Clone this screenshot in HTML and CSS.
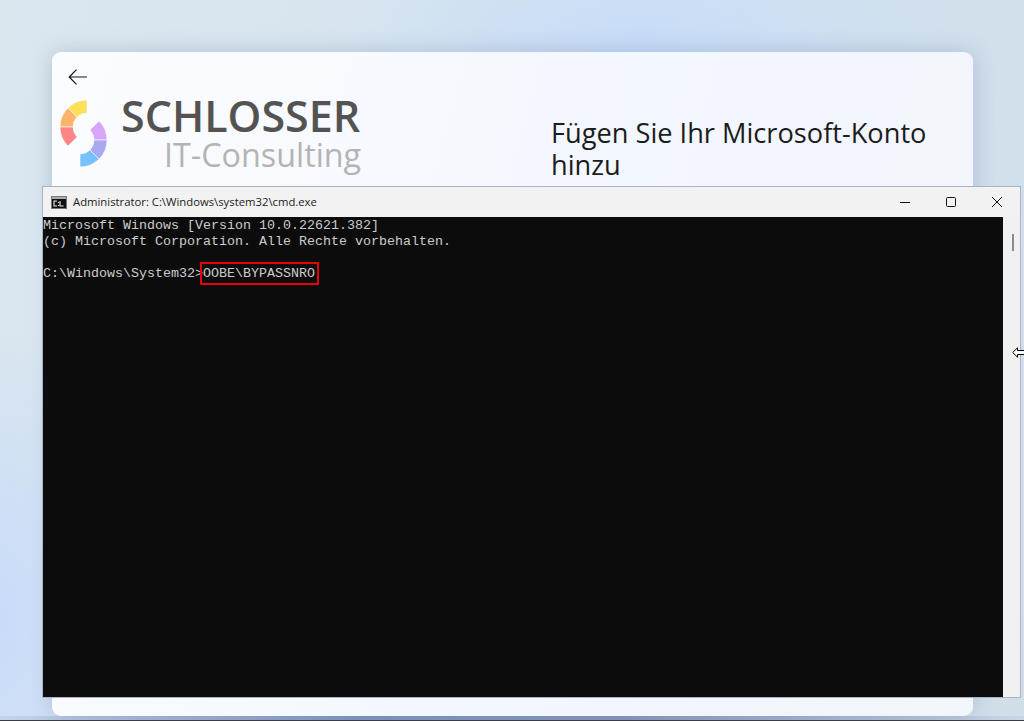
FILE: index.html
```html
<!DOCTYPE html>
<html lang="de">
<head>
<meta charset="utf-8">
<title>Administrator: C:\Windows\system32\cmd.exe</title>
<link rel="stylesheet" href="styles.css">
</head>
<body>
<main class="desktop">
  <section class="oobe-card">
    <svg class="back-icon" width="20" height="16" viewBox="0 0 20 16" aria-hidden="true"><path d="M8.5 .7 1.2 8l7.3 7.3M1.4 8H19" fill="none" stroke="#10131c" stroke-width="1.2"/></svg>
    <div class="oobe-columns">
      <div class="brand">
        <svg class="brand-mark" width="48" height="68" viewBox="0 0 48 68" aria-hidden="true">
          <g stroke="#fafcff" stroke-width=".6">
            <path fill="#fbe05a" d="M27 0A27 27 0 0 0 7.91 7.91L17.1 17.1A14 14 0 0 1 27 13Z"/>
            <path fill="#fdb468" d="M7.91 7.91A27 27 0 0 0 0 27L13 27A14 14 0 0 1 17.1 17.1Z"/>
            <path fill="#fe8587" d="M0 27A27 27 0 0 0 7.91 46.09L17.1 36.9A14 14 0 0 1 13 27Z"/>
            <path fill="#d8a6f8" d="M39.09 20.91A27 27 0 0 1 47 40L34 40A14 14 0 0 0 29.9 30.1Z"/>
            <path fill="#a8a9f0" d="M47 40A27 27 0 0 1 39.09 59.09L29.9 49.9A14 14 0 0 0 34 40Z"/>
            <path fill="#79c0fe" d="M39.09 59.09A27 27 0 0 1 20 67L20 54A14 14 0 0 0 29.9 49.9Z"/>
          </g>
        </svg>
        <div class="brand-text">
          <div class="brand-name">SCHLOSSER</div>
          <div class="brand-sub">IT-Consulting</div>
        </div>
      </div>
      <h1 class="oobe-title">Fügen Sie Ihr Microsoft-Konto hinzu</h1>
    </div>
  </section>

  <section class="cmd-window">
    <header class="cmd-titlebar">
      <svg class="cmd-icon" width="16" height="13" viewBox="0 0 16 13" aria-hidden="true">
        <rect x=".5" y=".5" width="15" height="12" fill="#111" stroke="#777"/>
        <rect x="1" y="1" width="14" height="2" fill="#aaa"/>
        <path d="M6 5H3v5h3M7.5 6v1M7.5 9v1M9 5v5h3.5" fill="none" stroke="#eee" stroke-width="1.1"/>
      </svg>
      <span class="cmd-title">Administrator: C:\Windows\system32\cmd.exe</span>
      <div class="cmd-controls">
        <button class="cmd-btn" aria-label="Minimieren"><svg width="10" height="10" viewBox="0 0 10 10"><path d="M0 5.5H10" stroke="#111" stroke-width="1"/></svg></button>
        <button class="cmd-btn" aria-label="Maximieren"><svg width="10" height="10" viewBox="0 0 10 10"><rect x=".5" y=".5" width="9" height="9" rx="1" fill="none" stroke="#111"/></svg></button>
        <button class="cmd-btn" aria-label="Schließen"><svg width="10" height="10" viewBox="0 0 10 10"><path d="M0 0 10 10M10 0 0 10" stroke="#111" stroke-width="1"/></svg></button>
      </div>
    </header>
    <div class="cmd-body">
      <pre class="cmd-output">Microsoft Windows [Version 10.0.22621.382]
(c) Microsoft Corporation. Alle Rechte vorbehalten.

C:\Windows\System32&gt;<span class="cmd-input">OOBE\BYPASSNRO</span></pre>
      <div class="cmd-scrollbar"><div class="cmd-thumb"></div></div>
    </div>
  </section>

  <svg class="resize-cursor" width="18" height="11" viewBox="0 0 18 11" aria-hidden="true">
    <path d="M.7 5.5 5.5 .8V3.5H18V7.5H5.5V10.2Z" fill="#fff" stroke="#000"/>
  </svg>
</main>
</body>
</html>
```
FILE: styles.css
```css
* { box-sizing: border-box; }
html, body { margin: 0; height: 100%; overflow: hidden; }
.desktop {
  position: relative;
  width: 1024px;
  height: 721px;
  overflow: hidden;
  border-bottom: 1px solid #3a3d42;
  background:
    linear-gradient(90deg, #c3d3ec 0%, #8598c2 35%, #8a9ac0 60%, #c9d5e4 100%) bottom 0 left 0 / 100% 4px no-repeat,
    radial-gradient(ellipse 300px 120px at 640px 40px, #c7dcf7 0%, rgba(199,220,247,0) 100%),
    radial-gradient(ellipse 140px 300px at 0 620px, #c8dbf9 0%, rgba(200,219,249,0) 100%),
    linear-gradient(100deg, #dbe7ef 0%, #d5e3f0 60%, #d0deea 100%);
  font-family: "Open Sans", "Liberation Sans", sans-serif;
}
.oobe-card {
  position: absolute;
  left: 52px;
  top: 52px;
  width: 921px;
  height: 664px;
  border-radius: 9px;
  background: linear-gradient(105deg, #fbfcfe 0%, #f3f7fe 55%, #f2f5fa 100%);
  box-shadow: 0 0 22px rgba(60, 85, 140, .24);
  padding: 17px 0 0 8px;
}
.back-icon { display: block; margin-left: 8px; }
.oobe-columns { display: flex; margin-top: 15px; }
.brand { display: flex; width: 491px; align-items: flex-start; }
.brand-mark { flex: none; margin-top: 0; }
.brand-text { margin-left: 13px; margin-top: -9px; }
.brand-name { font-size: 43px; font-weight: 600; line-height: 50px; color: #535353; white-space: nowrap; }
.brand-sub { font-size: 32.3px; line-height: 27px; color: #b4b4b4; margin-left: 43px; white-space: nowrap; }
.oobe-title {
  margin: 17px 0 0;
  width: 400px;
  font-size: 27.2px;
  line-height: 32px;
  font-weight: 400;
  color: #1b1c1e;
}
.cmd-window {
  position: absolute;
  left: 42px;
  top: 186px;
  width: 979px;
  height: 512px;
  border: 1px solid #a9b4c2;
  background: #f0f0f0;
  display: flex;
  flex-direction: column;
}
.cmd-titlebar {
  flex: none;
  height: 30px;
  display: flex;
  align-items: center;
  padding-left: 8px;
  background: #f2f2f2;
}
.cmd-icon { flex: none; }
.cmd-title { margin-left: 6px; margin-top: -2px; font-family: "Open Sans", sans-serif; font-size: 11.3px; color: #1a1a1a; }
.cmd-controls { margin-left: auto; display: flex; }
.cmd-btn {
  width: 46px;
  height: 30px;
  padding: 0;
  border: 0;
  background: none;
  display: flex;
  align-items: center;
  justify-content: center;
}
.cmd-body { flex: 1; display: flex; min-height: 0; }
.cmd-output {
  flex: 1;
  margin: 0;
  padding-top: 1px;
  background: #0c0c0c;
  color: #cccccc;
  font-family: "Liberation Mono", monospace;
  font-size: 13.33px;
  line-height: 16px;
}
.cmd-input { position: relative; }
.cmd-input::after {
  content: "";
  position: absolute;
  left: -3px;
  right: -4px;
  top: -4px;
  bottom: -4px;
  border: 2px solid #e8000b;
}
.cmd-scrollbar { flex: none; width: 17px; background: #f0f0f0; padding-top: 17px; display: flex; justify-content: center; }
.cmd-thumb { width: 2px; height: 17px; background: #8b8b8b; margin-left: 2px; }
.resize-cursor { position: absolute; left: 1012px; top: 347px; }
```
